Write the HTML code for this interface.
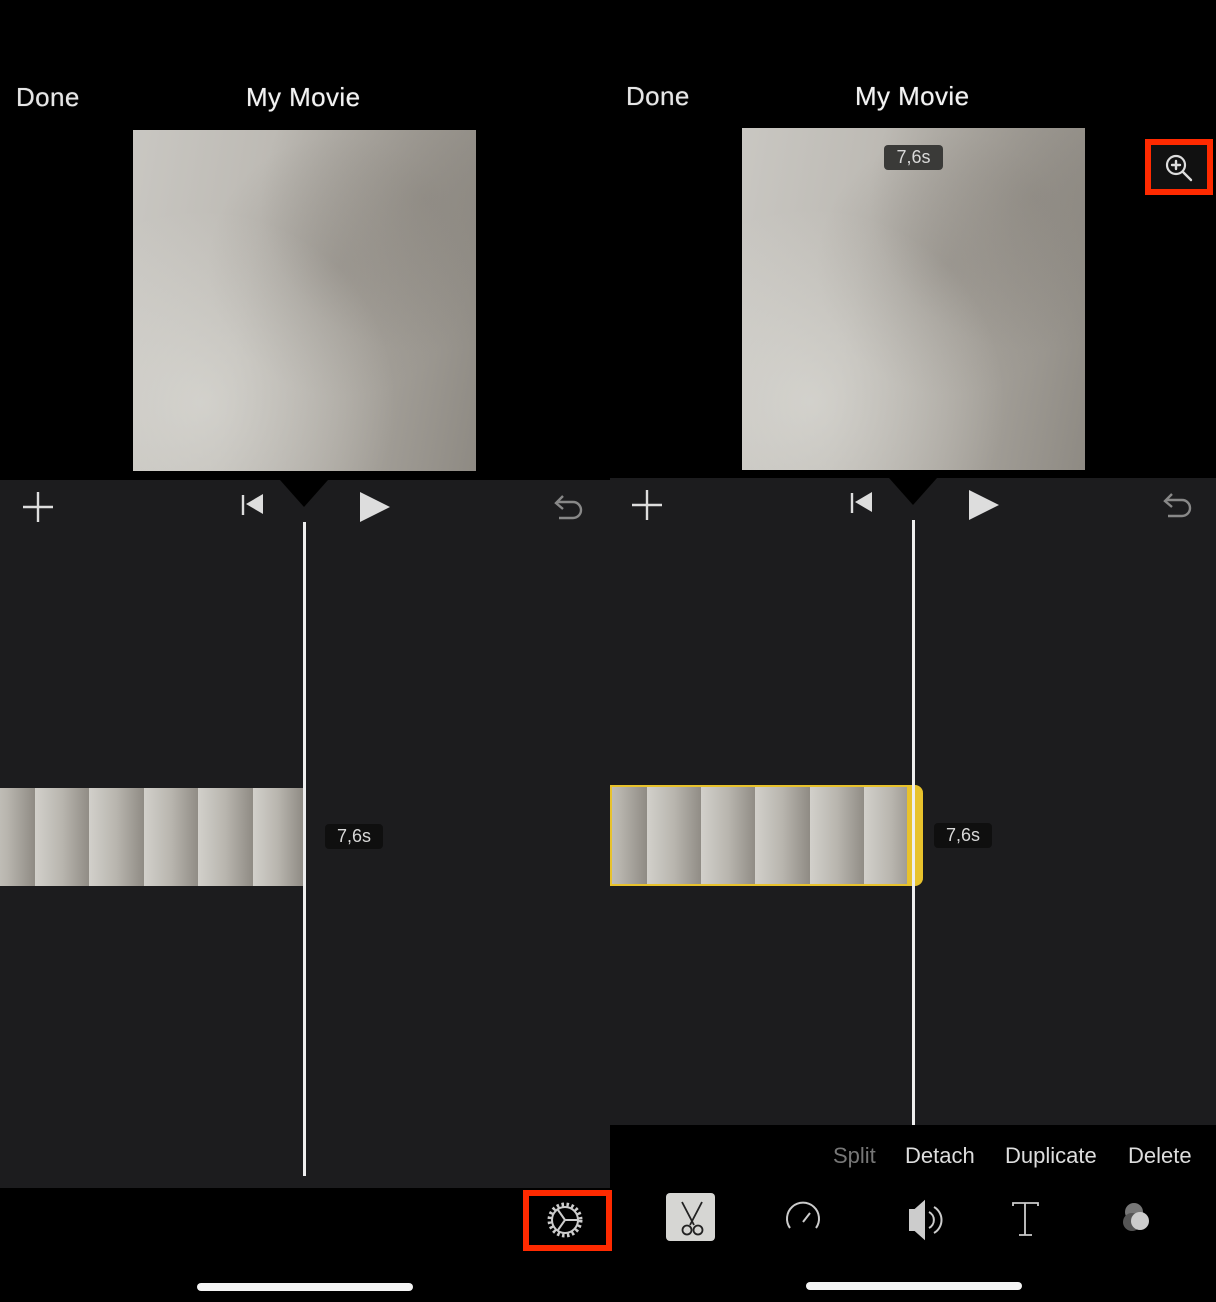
<!DOCTYPE html>
<html><head><meta charset="utf-8"><style>
*{margin:0;padding:0;box-sizing:border-box}
body{width:1216px;height:1302px;background:#000;position:relative;overflow:hidden;font-family:"Liberation Sans",sans-serif}
.a{position:absolute}
.t{color:#e6e6e6;font-size:26px;letter-spacing:.4px;text-shadow:0 0 .6px #e6e6e6}
.img{background:linear-gradient(100deg,#c9c7c2 0%,#bdbab4 35%,#a9a59e 65%,#8e8a83 100%);}
.img::after{content:"";position:absolute;inset:0;background:radial-gradient(ellipse at 20% 80%,rgba(230,230,225,.5),transparent 50%),radial-gradient(ellipse at 60% 40%,rgba(130,125,118,.35),transparent 45%),radial-gradient(ellipse at 85% 20%,rgba(110,105,98,.3),transparent 40%)}
.fr{position:absolute;top:0;height:100%;width:55px;background:linear-gradient(90deg,#d2d0cb 0%,#b8b5ae 50%,#8f8b84 100%)}
.lab{background:#0f0f0f;color:#d8d8d8;font-size:18px;border-radius:4px;padding:2px 0;text-align:center}
.bl{font-size:22px;top:1143px}
</style></head><body>
<div class="a t" style="left:16px;top:82px">Done</div>
<div class="a t" style="left:246px;top:82px;color:#f2f2f2">My Movie</div>
<div class="a img" style="left:133px;top:130px;width:343px;height:341px"></div>
<div class="a" style="left:0;top:480px;width:610px;height:708px;background:#1c1c1e"></div>
<div class="a" style="left:280px;top:480px;width:0;height:0;border-left:24px solid transparent;border-right:24px solid transparent;border-top:27px solid #000"></div>
<div class="a" style="left:303px;top:522px;width:3px;height:654px;background:#eee"></div>
<div class="a" style="left:0;top:788px;width:303px;height:98px;overflow:hidden">
<div class="fr" style="left:-20px"></div><div class="fr" style="left:35px"></div><div class="fr" style="left:89px"></div><div class="fr" style="left:144px"></div><div class="fr" style="left:198px"></div><div class="fr" style="left:253px;width:50px"></div></div>
<div class="a lab" style="left:325px;top:824px;width:58px">7,6s</div>
<div class="a t" style="left:626px;top:81px">Done</div>
<div class="a t" style="left:855px;top:81px;color:#f2f2f2">My Movie</div>
<div class="a img" style="left:742px;top:128px;width:343px;height:342px"></div>
<div class="a lab" style="left:884px;top:145px;width:59px;background:#3a3a38;z-index:2">7,6s</div>
<div class="a" style="left:1145px;top:139px;width:68px;height:56px;border:6px solid #ff2a00;background:#111"></div>
<svg class="a" style="left:1162px;top:151px" width="34" height="34" viewBox="0 0 34 34"><circle cx="14" cy="14" r="9" fill="none" stroke="#ddd" stroke-width="2.2"/><path d="M10 14h8M14 10v8M21 21l8 8" stroke="#ddd" stroke-width="2.4" stroke-linecap="round"/></svg>
<div class="a" style="left:610px;top:478px;width:606px;height:647px;background:#1c1c1e"></div>
<div class="a" style="left:889px;top:478px;width:0;height:0;border-left:24px solid transparent;border-right:24px solid transparent;border-top:27px solid #000"></div>
<div class="a" style="left:912px;top:520px;width:3px;height:605px;background:#eee"></div>
<div class="a" style="left:610px;top:785px;width:313px;height:101px;border:2px solid #e8c22c;border-right:none;border-radius:0 8px 8px 0;overflow:hidden;background:#e8c22c">
<div class="a" style="left:0;top:0;width:295px;height:97px;overflow:hidden">
<div class="fr" style="left:-20px"></div><div class="fr" style="left:35px"></div><div class="fr" style="left:89px"></div><div class="fr" style="left:143px"></div><div class="fr" style="left:198px"></div><div class="fr" style="left:252px"></div></div></div>
<div class="a" style="left:912px;top:785px;width:3px;height:101px;background:#eee"></div>
<div class="a lab" style="left:934px;top:823px;width:58px">7,6s</div>
<svg class="a" style="left:0;top:480px" width="1216" height="60">
<g stroke="#ddd" stroke-width="2.4" fill="none">
<path d="M38 12v30M23 27h30"/><path d="M647 10v30M632 25h30"/>
<path d="M243 15v20M852 13v20"/>
<path d="M563 16l-7 7 7 6M557 22h16a8 8 0 0 1 0 16h-14" stroke="#888"/>
<path d="M1172 14l-7 7 7 6M1166 20h16a8 8 0 0 1 0 16h-14" stroke="#888"/>
</g>
<g fill="#ddd"><path d="M246 24l17-10v20z"/><path d="M855 22l17-10v20z"/>
<path d="M360 12l30 15-30 15z"/><path d="M969 10l30 15-30 15z"/></g>
</svg>
<div class="a" style="left:523px;top:1190px;width:89px;height:61px;border:6px solid #ff2a00"></div>
<svg class="a" style="left:545px;top:1200px" width="40" height="40" viewBox="0 0 40 40"><circle cx="20" cy="20" r="15" fill="none" stroke="#ccc" stroke-width="5" stroke-dasharray="2.4 2.4"/><circle cx="20" cy="20" r="13" fill="none" stroke="#ccc" stroke-width="2"/><path d="M20 20l13 0M20 20l-7-10M20 20l-7 10" stroke="#ccc" stroke-width="2"/></svg>
<div class="a" style="left:197px;top:1283px;width:216px;height:8px;border-radius:4px;background:#f4f4f4"></div>
<div class="a bl" style="left:833px;color:#777">Split</div>
<div class="a bl" style="left:905px;color:#ddd">Detach</div>
<div class="a bl" style="left:1005px;color:#ddd">Duplicate</div>
<div class="a bl" style="left:1128px;color:#ddd">Delete</div>
<div class="a" style="left:666px;top:1193px;width:49px;height:48px;border-radius:4px;background:#d6d6d3"></div>
<svg class="a" style="left:610px;top:1190px" width="606" height="60">
<g stroke="#222" stroke-width="1.8" fill="none"><path d="M72 12l12 23M92 12l-12 23"/><circle cx="77" cy="40" r="4.5"/><circle cx="88" cy="40" r="4.5"/></g>
<g stroke="#ccc" stroke-width="2" fill="none"><path d="M180 38a16 16 0 1 1 26 0"/><path d="M193 32l7-9"/><path d="M300 20h5l9-8v36l-9-8h-5z" fill="#ccc"/><path d="M319 22a9 9 0 0 1 0 16M324 17a15 15 0 0 1 0 26"/>
<path d="M403 16v-3h25v3M415 13v32M409 45h13" stroke-width="1.8"/></g>
<circle cx="524" cy="22" r="9" fill="#777"/><circle cx="522" cy="32" r="9" fill="#555"/><circle cx="530" cy="31" r="9" fill="#ccc"/>
</svg>
<div class="a" style="left:806px;top:1282px;width:216px;height:8px;border-radius:4px;background:#f4f4f4"></div>
</body></html>
